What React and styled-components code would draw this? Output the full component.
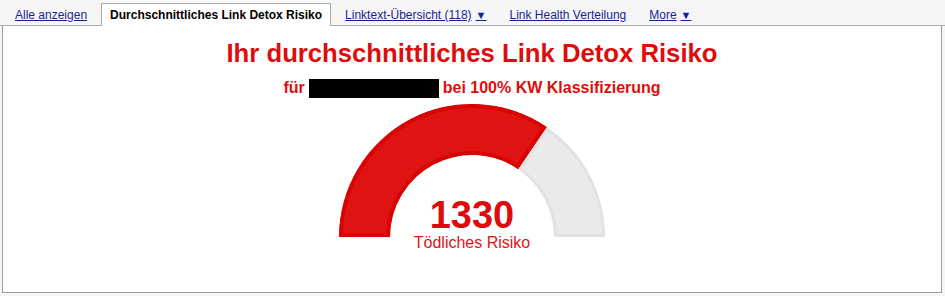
import React from 'react'
import styled, {createGlobalStyle} from 'styled-components'

const GlobalStyle = createGlobalStyle`
  html, body {
    margin: 0;
    padding: 0;
    background: #f6f6f6;
    font-family: "Liberation Sans", Arial, sans-serif;
  }
`

const Page = styled.div`
  width: 945px;
  height: 296px;
  overflow: hidden;
`

const TabBar = styled.div`
  display: flex;
  align-items: flex-end;
  gap: 5px;
  height: 26px;
  box-sizing: border-box;
  padding: 3px 0 0 6px;
  border-bottom: 1px solid #ababab;
`

const Tab = styled.a`
  display: flex;
  align-items: center;
  height: 23px;
  box-sizing: border-box;
  margin-bottom: -1px;
  padding: 0 8px;
  border: 1px solid transparent;
  border-bottom: none;
  font-size: 12px;
  color: #1d1d96;
  text-decoration: underline;
  white-space: nowrap;
  cursor: pointer;

  ${p => p.$active && `
    background: #fff;
    border-color: #ababab;
    color: #000;
    font-weight: bold;
    text-decoration: none;
  `}
`

const Arrow = styled.span`
  margin-left: 4px;
  font-size: 11px;
`

const Panel = styled.div`
  margin-left: 2px;
  width: 940px;
  height: 267px;
  box-sizing: border-box;
  background: #fff;
  border: 1px solid #9c9c9c;
  border-top: none;
  display: flex;
  flex-direction: column;
  align-items: center;
  padding-top: 12px;
`

const Title = styled.h1`
  margin: 0;
  font-size: 25.7px;
  line-height: 30px;
  font-weight: bold;
  color: #df0c0c;
`

const Subtitle = styled.div`
  margin-top: 10px;
  display: flex;
  align-items: center;
  gap: 4px;
  height: 20px;
  font-size: 16px;
  font-weight: bold;
  color: #df0c0c;
`

const Redacted = styled.span`
  display: inline-block;
  width: 130px;
  height: 19px;
  background: #000;
`

const GaugeWrap = styled.div`
  position: relative;
  margin-top: 6px;
  width: 266px;
  display: flex;
  flex-direction: column;
  align-items: center;
`

const Value = styled.div`
  position: absolute;
  top: 92px;
  left: 0;
  right: 0;
  text-align: center;
  font-size: 38px;
  line-height: 38px;
  font-weight: bold;
  color: #dd0b0b;
`

const Label = styled.div`
  margin-top: -4px;
  font-size: 16px;
  line-height: 18px;
  color: #e01414;
`

const R = 133
const r = 82
const share = 0.69

function Gauge() {
  const a = Math.PI * (1 - share)
  const ox = R + R * Math.cos(a)
  const oy = R - R * Math.sin(a)
  const ix = R + r * Math.cos(a)
  const iy = R - r * Math.sin(a)
  const red = `M 0 ${R} A ${R} ${R} 0 0 1 ${ox} ${oy} L ${ix} ${iy} A ${r} ${r} 0 0 0 ${R - r} ${R} Z`
  const grey = `M ${ox} ${oy} A ${R} ${R} 0 0 1 ${2 * R} ${R} L ${R + r} ${R} A ${r} ${r} 0 0 0 ${ix} ${iy} Z`
  return (
    <svg width={2 * R} height={R + 1} viewBox={`0 0 ${2 * R} ${R + 1}`}>
      <defs>
        <clipPath id="redClip"><path d={red} /></clipPath>
        <clipPath id="greyClip"><path d={grey} /></clipPath>
      </defs>
      <path d={grey} fill="#ebeaeb" stroke="#e3e2e3" strokeWidth="6" clipPath="url(#greyClip)" />
      <path d={red} fill="#e01313" stroke="#d90303" strokeWidth="8" clipPath="url(#redClip)" />
    </svg>
  )
}

export default function App() {
  return (
    <Page>
      <GlobalStyle />
      <TabBar>
        <Tab>Alle anzeigen</Tab>
        <Tab $active>Durchschnittliches Link Detox Risiko</Tab>
        <Tab>Linktext-Übersicht (118)<Arrow>▼</Arrow></Tab>
        <Tab>Link Health Verteilung</Tab>
        <Tab>More<Arrow>▼</Arrow></Tab>
      </TabBar>
      <Panel>
        <Title>Ihr durchschnittliches Link Detox Risiko</Title>
        <Subtitle>
          für <Redacted /> bei 100% KW Klassifizierung
        </Subtitle>
        <GaugeWrap>
          <Gauge />
          <Value>1330</Value>
          <Label>Tödliches Risiko</Label>
        </GaugeWrap>
      </Panel>
    </Page>
  )
}
